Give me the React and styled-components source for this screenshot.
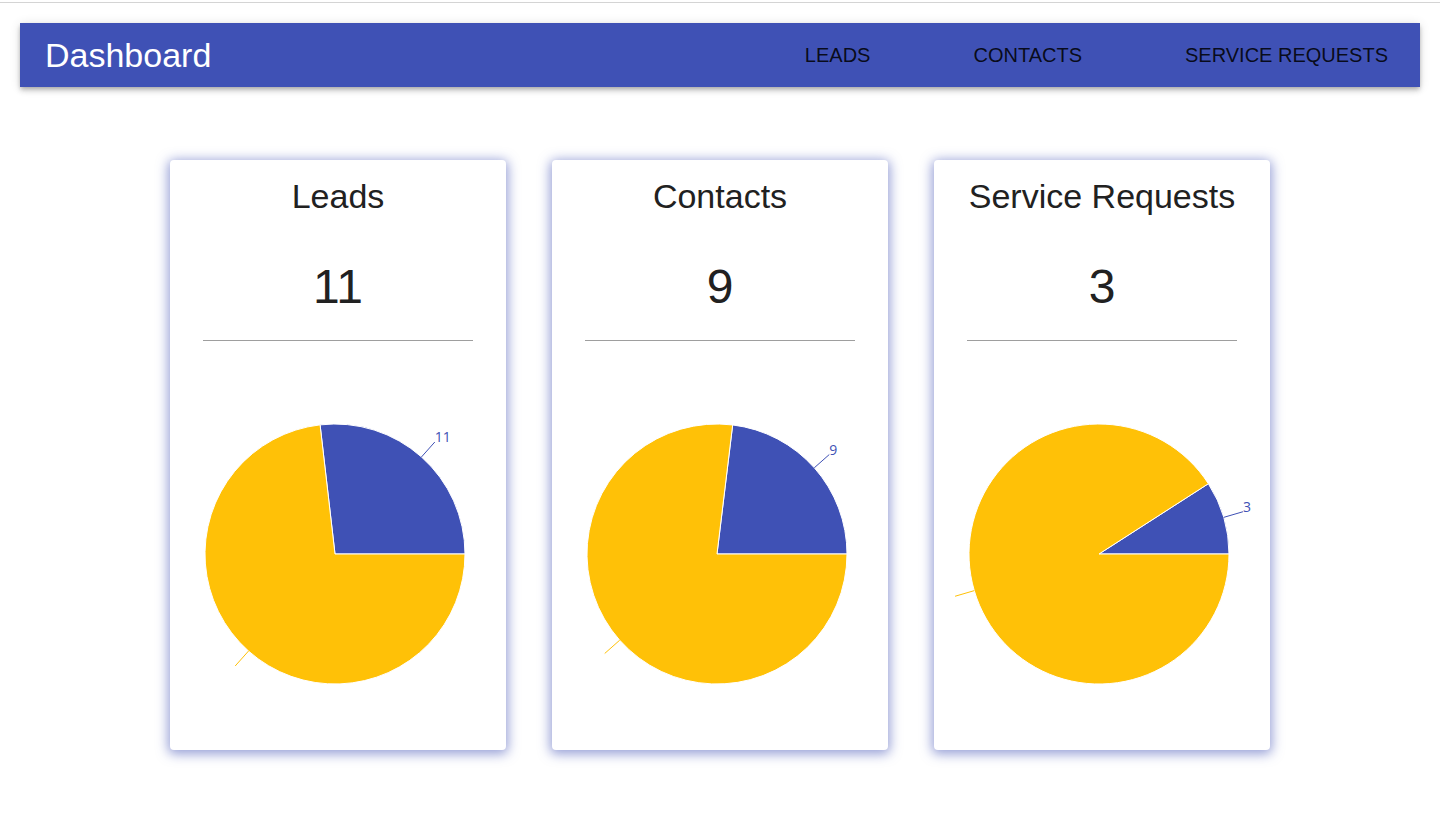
import React from "react";
import styled, {createGlobalStyle} from "styled-components";

const GlobalStyle = createGlobalStyle`
	html, body {
		margin: 0;
		padding: 0;
		background: #fff;
		font-family: "Liberation Sans", Arial, sans-serif;
	}
`;
const Page = styled.div`
	padding-top: 2px;
`;
const TopRule = styled.div`
	height: 1px;
	background: #d4d4d4;
`;
const Main = styled.div`
	padding: 20px 20px 40px;
`;
const Bar = styled.header`
	height: 64px;
	display: flex;
	align-items: center;
	justify-content: space-between;
	padding: 0 32px 0 25px;
	background: #3f51b5;
	box-shadow: 0 2px 4px -1px rgba(0,0,0,0.2), 0 4px 5px 0 rgba(0,0,0,0.14), 0 1px 10px 0 rgba(0,0,0,0.12);
`;
const Brand = styled.h1`
	margin: 0;
	font-size: 34px;
	line-height: 40px;
	font-weight: normal;
	color: #fff;
`;
const Nav = styled.nav`
	display: flex;
	gap: 103px;
`;
const NavLink = styled.a`
	font-size: 20px;
	line-height: 24px;
	color: rgba(0,0,0,0.87);
	text-transform: uppercase;
	text-decoration: none;
	cursor: pointer;
`;
const Cards = styled.div`
	display: flex;
	justify-content: center;
	gap: 46px;
	margin-top: 73px;
`;
const Card = styled.section`
	width: 336px;
	padding: 16px 0 9px;
	box-sizing: border-box;
	background: #fff;
	border-radius: 4px;
	box-shadow: 0 2px 12px 2px rgba(63,81,181,0.55);
	display: flex;
	flex-direction: column;
	align-items: center;
`;
const Title = styled.h2`
	margin: 0;
	font-size: 34px;
	line-height: 40px;
	font-weight: normal;
	color: #212121;
`;
const Count = styled.div`
	margin-top: 42px;
	font-size: 48px;
	line-height: 57.6px;
	color: #212121;
`;
const Divider = styled.hr`
	width: 270px;
	margin: 24px 0 0;
	border: none;
	border-top: 1px solid #9e9e9e;
`;
const Chart = styled.svg`
	display: block;
	width: 336px;
	height: 400px;
`;
const Label = styled.text`
	font-family: "Open Sans", sans-serif;
	font-size: 14px;
`;

const BLUE = "#3f51b5";
const YELLOW = "#ffc107";

function point(cx, cy, r, deg){
	const a = deg * Math.PI / 180;
	return [cx + r * Math.cos(a), cy - r * Math.sin(a)];
};

function PieChart({value, rest}){
	const cx = 165, cy = 213, r = 130;
	const total = value + rest;
	const slices = [
		{v: value, color: BLUE, label: String(value)},
		{v: rest, color: YELLOW, label: null}
	];
	let start = 0;
	return(
		<Chart viewBox = "0 0 336 400">
			{slices.map((s, i) => {
				const sweep = s.v / total * 360;
				const end = start + sweep;
				const [x0, y0] = point(cx, cy, r, start);
				const [x1, y1] = point(cx, cy, r, end);
				const mid = start + sweep / 2;
				const [lx0, ly0] = point(cx, cy, r, mid);
				const [lx1, ly1] = point(cx, cy, r + 20, mid);
				start = end;
				return(
					<g key = {i}>
						<path
							d = {`M${cx},${cy} L${x0},${y0} A${r},${r} 0 ${sweep > 180 ? 1 : 0} 0 ${x1},${y1} Z`}
							fill = {s.color}
							stroke = "#fff"
							strokeWidth = {1}
						/>
						<path d = {`M${lx0},${ly0} L${lx1},${ly1}`} stroke = {s.color} fill = "none"/>
						{s.label && (
							<Label x = {lx1} y = {ly1} fill = {s.color} textAnchor = {lx1 > cx ? "start" : "end"}>
								{s.label}
							</Label>
						)}
					</g>
				);
			})}
		</Chart>
	);
};

const stats = [
	{title: "Leads", count: 11},
	{title: "Contacts", count: 9},
	{title: "Service Requests", count: 3}
];

export default function App(){
	return(
		<Page>
			<GlobalStyle/>
			<TopRule/>
			<Main>
				<Bar>
					<Brand>Dashboard</Brand>
					<Nav>
						<NavLink>Leads</NavLink>
						<NavLink>Contacts</NavLink>
						<NavLink>Service Requests</NavLink>
					</Nav>
				</Bar>
				<Cards>
					{stats.map(s => (
						<Card key = {s.title}>
							<Title>{s.title}</Title>
							<Count>{s.count}</Count>
							<Divider/>
							<PieChart value = {s.count} rest = {30}/>
						</Card>
					))}
				</Cards>
			</Main>
		</Page>
	);
};
